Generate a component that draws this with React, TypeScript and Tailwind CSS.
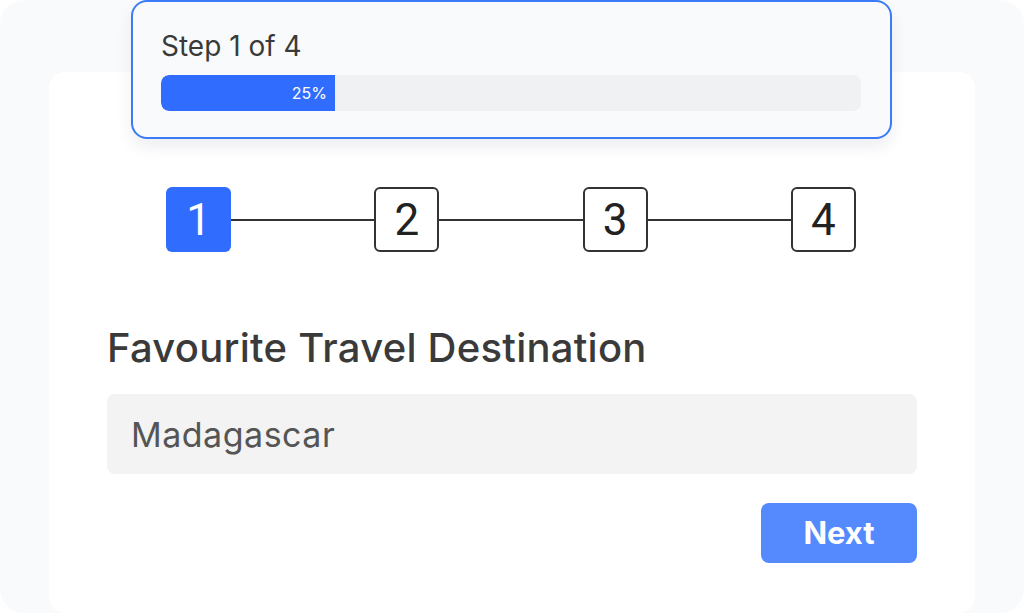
export default function App() {
  const steps = [1, 2, 3, 4];
  return (
    <div className="h-[615px] w-[1024px] overflow-hidden bg-white font-['Inter',sans-serif]">
      <div className="h-[613px] w-[1024px] rounded-[24px] bg-[#f9fafc] pl-[49px] pt-[72px]">
        <div className="flex h-[541px] w-[926px] flex-col rounded-[16px] bg-white">
          <div className="-mt-[72px] ml-[82px] h-[139px] w-[761px] rounded-[16px] border-2 border-[#3b7bf6] bg-[#f9fafc] px-[28px] pt-[27px] shadow-[0_8px_16px_rgba(30,40,80,0.08)]">
            <div className="text-[28px] leading-[34px] text-[#3a3a3a]">Step 1 of 4</div>
            <div className="mt-[12px] h-[36px] w-[700px] overflow-hidden rounded-[8px] bg-[#f0f1f3]">
              <div className="flex h-full w-[174px] items-center justify-end rounded-l-[8px] bg-[#306cfe] pr-[8px] text-[16px] text-white">
                25%
              </div>
            </div>
          </div>

          <div className="ml-[117px] mt-[48px] flex w-[690px] items-center">
            {steps.map((n, i) => (
              <div key={n} className={i === 0 ? "flex items-center" : "flex flex-1 items-center"}>
                {i > 0 && <div className="h-[2px] flex-1 bg-[#333]" />}
                <div
                  className={
                    n === 1
                      ? "flex h-[65px] w-[65px] items-center justify-center rounded-[6px] bg-[#306cfe] font-['Roboto',sans-serif] text-[44px] text-white"
                      : "flex h-[65px] w-[65px] items-center justify-center rounded-[6px] border-2 border-[#333] font-['Roboto',sans-serif] text-[44px] text-[#222]"
                  }
                >
                  {n}
                </div>
              </div>
            ))}
          </div>

          <div className="ml-[58px] mr-[58px] mt-[72px]">
            <div className="text-[40px] font-medium leading-[48px] tracking-[0.25px] text-[#3a3a3a]">
              Favourite Travel Destination
            </div>
            <div className="mt-[22px] flex h-[80px] items-center rounded-[8px] bg-[#f3f3f3] pl-[24px] text-[34px] tracking-[0.5px] text-[#555]">
              Madagascar
            </div>
            <div className="mt-[29px] flex justify-end">
              <button className="h-[60px] w-[156px] rounded-[8px] bg-[#5589fe] text-[31px] font-bold text-white">
                Next
              </button>
            </div>
          </div>
        </div>
      </div>
    </div>
  );
}
